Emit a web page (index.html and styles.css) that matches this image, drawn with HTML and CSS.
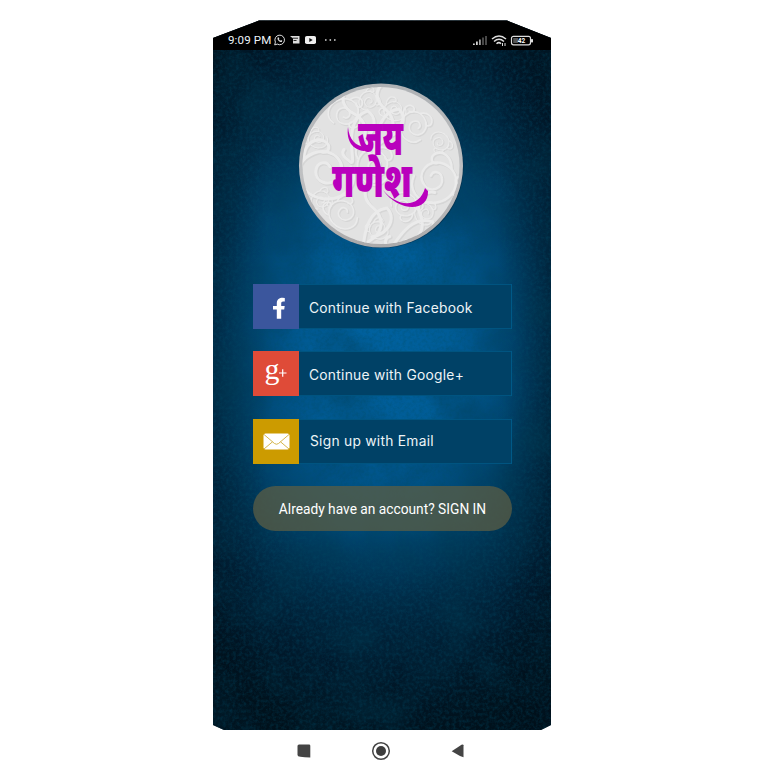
FILE: index.html
```
<!DOCTYPE html>
<html lang="en">
<head>
<meta charset="utf-8">
<title>Jai Ganesh</title>
<link rel="stylesheet" href="styles.css">
</head>
<body>
<main class="phone">
  <svg class="texture" width="338" height="710" aria-hidden="true">
    <filter id="grain" x="0" y="0" width="100%" height="100%">
      <feTurbulence type="fractalNoise" baseFrequency="0.3" numOctaves="3" seed="8"/>
      <feColorMatrix values="0 0 0 0 0  0 0 0 0 0.08  0 0 0 0 0.15  1.2 0 0 0 -0.45"/>
    </filter>
    <filter id="clouds" x="0" y="0" width="100%" height="100%">
      <feTurbulence type="fractalNoise" baseFrequency="0.018" numOctaves="3" seed="3"/>
      <feColorMatrix values="0 0 0 0 0  0 0 0 0 0.04  0 0 0 0 0.08  1.5 0 0 0 -0.6"/>
    </filter>
    <rect width="338" height="710" filter="url(#grain)" opacity=".6"/>
    <rect width="338" height="710" filter="url(#clouds)" opacity=".6"/>
  </svg>
  <header class="status">
    <span class="time">9:09 PM</span>
    <svg class="notices" width="66" height="12" viewBox="0 0 66 12">
      <g fill="none" stroke="#ddd"><path d="M.7 10.900l.7-2.800a4.800 4.800 0 1 1 1.900 2z"/><path d="M3.500 3.700c-.3 2.400 2 4.600 4.300 4.300l.5-1.200-1.300-.7-.8.6-1.400-1.400.5-.8-.6-1.200z" fill="#ddd" stroke="none"/></g>
      <path d="M16 2h9.500v7.500H19v-5z" fill="#ddd"/><path d="M18.500 4.200H24M19.500 6.500h3" stroke="#111" stroke-width=".9"/>
      <rect x="31" y="2" width="11" height="8" rx="1.800" fill="#eee"/><path d="M35.300 4v4l3.400-2z" fill="#111"/>
      <g fill="#bbb"><circle cx="51.800" cy="6" r=".9"/><circle cx="56.300" cy="6" r=".9"/><circle cx="60.800" cy="6" r=".9"/></g>
    </svg>
    <svg class="signals" width="62" height="13" viewBox="0 0 62 13">
      <g stroke="#ddd" stroke-width="1.700"><path d="M1.900 11V9.500M4.900 11V7.500"/><path d="M7.900 11V5.500" stroke="#aaa"/><path d="M11 11V3.500M14 11V2" stroke="#555"/></g>
      <g fill="none" stroke="#ddd" stroke-width="1.500"><path d="M20 5Q27 -1 34 5M22 7.500Q27 3 32 7.500M24.500 9.700Q27 7.500 29 9.700"/><path d="M30.500 9v3M33 9v3" stroke-width="1"/></g>
      <rect x="39.500" y="2.300" width="19" height="8.500" rx="2" fill="none" stroke="#ddd" stroke-width="1.200"/><rect x="59" y="5" width="2" height="3.500" rx=".7" fill="#ddd"/><rect x="41.200" y="4" width="5" height="5" fill="#555"/>
      <text class="charge" x="49.500" y="8.900" text-anchor="middle">42</text>
    </svg>
  </header>
  <section class="content">
    <svg class="emblem" width="166" height="168" viewBox="0 0 166 168">
      <defs>
        <linearGradient id="rim" x2="0" y2="1"><stop stop-color="#aeb1b4"/><stop offset=".55" stop-color="#bfc0c2"/><stop offset="1" stop-color="#aaa9aa"/></linearGradient>
        <clipPath id="disc"><circle cx="83" cy="83.500" r="78.500"/></clipPath>
        <g id="scroll" fill="none" stroke-linecap="round">
          <path d="M0 34C-30 32-38-2-12-12 8-19 23 0 12 13 4 23-12 17-10 5-9-3 1-5 4 2"/>
          <path d="M0 34C20 35 33 18 25 2M-24 24C-38 24-44 12-37 5-31 0-24 6-29 12"/>
          <path d="M-22-7C-22-20-12-28-2-24 6-20 3-11-4-13"/>
        </g>
        <g id="leaf" fill="none" stroke-linecap="round"><path d="M0 0C16-9 18-24 3-36-7-46-3-58 7-61M4-5C22-9 28-24 19-34-10-30-2 18-8 13-12 8-17 3-12-1"/></g>
        <g id="pattern">
          <use href="#scroll" x="28" y="83"/><use href="#scroll" transform="translate(136 92) scale(-.8 .85)"/>
          <use href="#scroll" transform="translate(121 44) scale(.55) rotate(80)"/><use href="#scroll" transform="translate(48 35) scale(.55) rotate(150)"/>
          <use href="#leaf" transform="translate(82 61)"/><use href="#leaf" transform="translate(58 66) rotate(-12)"/>
          <use href="#leaf" transform="translate(70 160)"/><use href="#leaf" transform="translate(102 161) rotate(28)"/>
          <use href="#scroll" transform="translate(48 128) scale(.55) rotate(30)"/><use href="#scroll" transform="translate(105 127) scale(.48) rotate(190)"/>
          <use href="#scroll" transform="translate(81 82) scale(.65) rotate(60)"/><use href="#scroll" transform="translate(97 25) scale(.4)"/>
          <use href="#scroll" transform="translate(73 20) scale(.35) rotate(110)"/><use href="#scroll" transform="translate(140 62) scale(.35) rotate(210)"/>
          <use href="#scroll" transform="translate(20 54) scale(.35)"/><use href="#scroll" transform="translate(25 120) scale(.35) rotate(120)"/>
          <use href="#scroll" transform="translate(130 130) scale(.4) rotate(60)"/><use href="#scroll" transform="translate(82 145) scale(.35) rotate(20)"/>
        </g>
      </defs>
      <circle cx="84" cy="84.500" r="81.500" fill="#0a1c2c" opacity=".4"/>
      <circle cx="83" cy="83.500" r="82" fill="url(#rim)"/>
      <circle cx="83" cy="83.500" r="78.500" fill="#e2e2e2"/>
      <g clip-path="url(#disc)">
        <use href="#pattern" stroke="#d6d6d6" stroke-width="3.500" x="1" y="1"/>
        <use href="#pattern" stroke="#ebebeb" stroke-width="3"/>
      </g>
      <text class="word" transform="translate(60 73) scale(1 1.260)" textLength="45" lengthAdjust="spacingAndGlyphs">जय</text>
      <text class="word" transform="translate(34 115) scale(1 1.220)" textLength="80" lengthAdjust="spacingAndGlyphs">गणेश</text>
      <g fill="#b900bd"><path d="M50 45C51 58 58 64 67 65L66 69C55 68 48 59 50 45Z"/><path d="M85 108C99 125 121 127 127 106L130 109C131 131 100 130 85 108Z"/></g>
    </svg>
    <nav class="choices">
      <a class="choice">
        <span class="tile facebook"><svg width="46" height="45" viewBox="0 0 46 45"><path d="M23.800 34.800V25.500H20V22H23.800V19.200C23.800 15.500 26.500 13.800 29.500 13.800L31.800 14V17.500H30.200C28.700 17.500 28.200 18.200 28.200 19.500V22H31.700L31.200 25.500H28.200V34.800Z" fill="#fff"/></svg></span>
        <span class="label">Continue with Facebook</span>
      </a>
      <a class="choice">
        <span class="tile google"><svg width="46" height="45" viewBox="0 0 46 45"><text class="gplus" x="11.500" y="28" textLength="15" lengthAdjust="spacingAndGlyphs">g</text><path d="M26 22h7.500M29.700 18.200v7.600" stroke="#fff" stroke-width="1.200"/></svg></span>
        <span class="label">Continue with Google+</span>
      </a>
      <a class="choice">
        <span class="tile email"><svg width="46" height="45" viewBox="0 0 46 45"><rect x="10.500" y="14.500" width="26" height="16" rx="2" fill="#fff"/><path d="M11 15.500L21.500 24.500Q23.500 26 25.500 24.500L36 15.500M11 30L19.500 22.800M36 30L27.500 22.800" fill="none" stroke="#d5b64c" stroke-width="1"/></svg></span>
        <span class="label mail">Sign up with Email</span>
      </a>
      <a class="signin"><span>Already have an account? SIGN IN</span></a>
    </nav>
  </section>
</main>
<footer class="keys">
  <svg width="14" height="14" viewBox="0 0 14 14"><path d="M2 .5h10q1.300 0 1.300 1.300v11.700q-6-.2-10-.7Q.5 12.500.5 11V2Q.5.500 2 .5z" fill="#444"/></svg>
  <svg width="20" height="20" viewBox="0 0 20 20"><circle cx="10" cy="10" r="8.300" fill="none" stroke="#444" stroke-width="1.500"/><circle cx="10" cy="10" r="5" fill="#3d3d3d"/></svg>
  <svg width="14" height="14" viewBox="0 0 14 14"><path d="M.7 7.200L10.500.7q1.800-.8 2 .5v12L9 12z" fill="#444"/></svg>
</footer>
</body>
</html>
```
FILE: styles.css
```
* { box-sizing: border-box; }
body {
  margin: 0;
  width: 765px;
  height: 765px;
  padding-top: 20px;
  background: #fff;
  font-family: Roboto, "Noto Sans", sans-serif;
  overflow: hidden;
}
.phone {
  position: relative;
  width: 338px;
  height: 710px;
  margin-left: 213px;
  color: #edf4f7;
  clip-path: polygon(0 18px, 46px .5px, 294px .5px, 338px 18px, 338px 705px, 328px 710px, 11px 710px, 0 705px);
  background:
    linear-gradient(90deg, rgba(0, 12, 22, .3), transparent 16%, transparent 84%, rgba(0, 12, 22, .35)),
    linear-gradient(180deg, rgba(0, 10, 18, .4), transparent 24%, transparent 72%, rgba(0, 10, 18, .45)),
    radial-gradient(ellipse 280px 400px at 168px 325px, #0062a0 0%, #005c96 25%, #004875 47%, #003150 64%, #002037 82%, #001724 100%);
}
.texture { position: absolute; inset: 0; }
.status {
  position: relative;
  display: flex;
  align-items: center;
  height: 30px;
  padding: 10px 17px 0 15px;
  background: #000;
}
.time { width: 45px; font-size: 11.6px; line-height: 20px; white-space: nowrap; letter-spacing: .1px; }
.notices { margin-left: 1px; }
.signals { margin-left: auto; }
.charge { font: bold 6.500px Roboto, sans-serif; fill: #fff; }
.content { position: relative; display: flex; flex-direction: column; padding-top: 32px; }
.emblem { display: block; margin-left: 85px; }
.word {
  font: 900 39px "Noto Sans", sans-serif;
  fill: #b900bd;
}
.choices { display: grid; gap: 22.300px; width: 259px; margin: 34px 0 0 40px; }
.choice {
  display: flex;
  align-items: center;
  height: 45px;
  background: #004166;
  box-shadow: inset -1px 0 #005987, inset 0 1px #005480, inset 0 -1px #005480;
}
.tile { display: block; width: 46px; height: 45px; }
.tile svg { display: block; }
.facebook { background: #3b569d; }
.google { background: #df4b38; }
.email { background: #cc9b00; }
.gplus { font: 30px "Liberation Serif", serif; fill: #fff; }
.label { margin: 2px 0 0 10px; font: 13.800px Inter, sans-serif; letter-spacing: .26px; white-space: nowrap; }
.mail { margin: 0 0 0 11px; }
.signin {
  display: flex;
  align-items: center;
  justify-content: center;
  height: 45px;
  padding-top: 1px;
  border-radius: 23px;
  background: rgba(91, 93, 68, .75);
  font-size: 13.750px;
  color: #fff;
  white-space: nowrap;
}
.keys { display: grid; grid-template-columns: 14px 20px 14px; gap: 60px; align-items: center; height: 34px; margin: 4px 0 0 297px; }
```
